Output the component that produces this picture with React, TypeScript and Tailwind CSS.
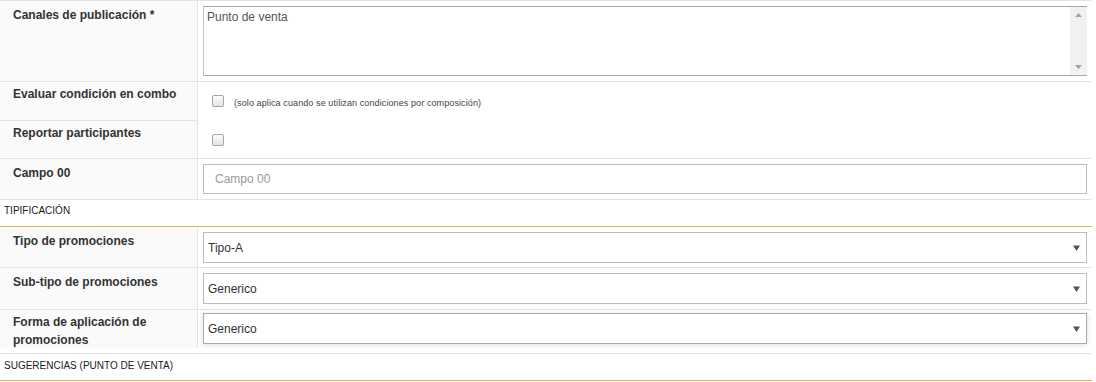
import React from 'react';

const Label = ({ text, pt = 'pt-[5px]' }: { text: string; pt?: string }) => (
  <div className={`w-[198px] shrink-0 bg-[#fafafa] border-r border-[#e3e3e3] pl-[13px] pr-3 ${pt} text-[12px] leading-[18px] font-bold text-[#333]`}>
    {text}
  </div>
);

const Checkbox = () => (
  <div className="w-[12px] h-[12px] rounded-[2px] border border-[#a6a6a6] bg-gradient-to-b from-[#fdfdfd] to-[#e3e3e3]" />
);

const Caret = () => (
  <svg width="7" height="6" viewBox="0 0 7 6" className="shrink-0">
    <path d="M0 0.5 H7 L3.5 6 Z" fill="#555" />
  </svg>
);

const Select = ({ value, focused = false }: { value: string; focused?: boolean }) => (
  <div
    className={`h-[31px] flex items-center justify-between border pl-[4px] pr-[6px] bg-white text-[12px] text-[#333] ${
      focused ? 'border-[#aaa] shadow-[0_1px_6px_rgba(0,0,0,0.14)]' : 'border-[#bdbdbd]'
    }`}
  >
    <span>{value}</span>
    <Caret />
  </div>
);

const SectionHeader = ({ title, pt }: { title: string; pt: string }) => (
  <div className={`h-[27px] pl-[4px] ${pt} text-[10px] leading-[14px] text-[#1a1a1a] border-b border-[#f0b043]`}>
    {title}
  </div>
);

const App = () => {
  const selects = [
    { label: 'Tipo de promociones', value: 'Tipo-A', h: 'h-[41px]', pt: 'pt-[5px]' },
    { label: 'Sub-tipo de promociones', value: 'Generico', h: 'h-[42px]', pt: 'pt-[5px]' },
  ];

  return (
    <div className="w-[1092px] bg-white font-['Liberation_Sans',Arial,sans-serif] text-[#333]">
      {/* canales */}
      <div className="flex h-[82px] border-t border-b border-[#e3e3e3]">
        <Label text="Canales de publicación *" pt="pt-[5px]" />
        <div className="flex-1 px-[5px] pt-[5px]">
          <div className="h-[70px] flex border border-[#c4c4c4] border-t-[#a9a9a9] border-b-[#a9a9a9] border-r-0">
            <div className="flex-1 pl-[3px] pt-[2px] text-[12px] leading-[17px] text-[#555]">Punto de venta</div>
            <div className="w-[17px] bg-[#f1f1f1] flex flex-col items-center justify-between py-[6px]">
              <svg width="7" height="4" viewBox="0 0 7 4"><path d="M0 4 L3.5 0 L7 4 Z" fill="#a3a3a3" /></svg>
              <svg width="7" height="4" viewBox="0 0 7 4"><path d="M0 0 L7 0 L3.5 4 Z" fill="#a3a3a3" /></svg>
            </div>
          </div>
        </div>
      </div>

      {/* checkboxes */}
      <div className="flex border-b border-[#e3e3e3]">
        <div className="flex flex-col">
          <div className="h-[39px] border-b border-[#e3e3e3] flex">
            <Label text="Evaluar condición en combo" pt="pt-[3px]" />
          </div>
          <div className="h-[37px] flex">
            <Label text="Reportar participantes" pt="pt-[3px]" />
          </div>
        </div>
        <div className="flex-1 flex flex-col">
          <div className="h-[39px] pl-[14px] pt-[13px] flex items-start gap-[10px]">
            <Checkbox />
            <span className="text-[9px] leading-[11px] mt-[3px] tracking-[0.1px] text-[#444]">
              (solo aplica cuando se utilizan condiciones por composición)
            </span>
          </div>
          <div className="h-[37px] pl-[14px] pt-[13px]">
            <Checkbox />
          </div>
        </div>
      </div>

      {/* campo 00 */}
      <div className="flex h-[41px] border-b border-[#e3e3e3]">
        <Label text="Campo 00" />
        <div className="flex-1 px-[5px] pt-[5px]">
          <div className="h-[30px] flex items-center border border-[#bdbdbd] pl-[11px] text-[12px] text-[#999]">Campo 00</div>
        </div>
      </div>

      <SectionHeader title="TIPIFICACIÓN" pt="pt-[4px]" />

      {selects.map((s) => (
        <div key={s.label} className={`flex ${s.h} border-b border-[#e3e3e3]`}>
          <Label text={s.label} pt={s.pt} />
          <div className="flex-1 px-[5px] pt-[5px]">
            <Select value={s.value} />
          </div>
        </div>
      ))}

      {/* forma */}
      <div className="flex h-[44px] border-b border-[#e3e3e3] items-start">
        <div className="h-[38px] flex">
          <Label text="Forma de aplicación de promociones" pt="pt-[3px]" />
        </div>
        <div className="flex-1 px-[5px] pt-[3px]">
          <Select value="Generico" focused />
        </div>
      </div>

      <SectionHeader title="SUGERENCIAS (PUNTO DE VENTA)" pt="pt-[5px]" />
    </div>
  );
};

export default App;
